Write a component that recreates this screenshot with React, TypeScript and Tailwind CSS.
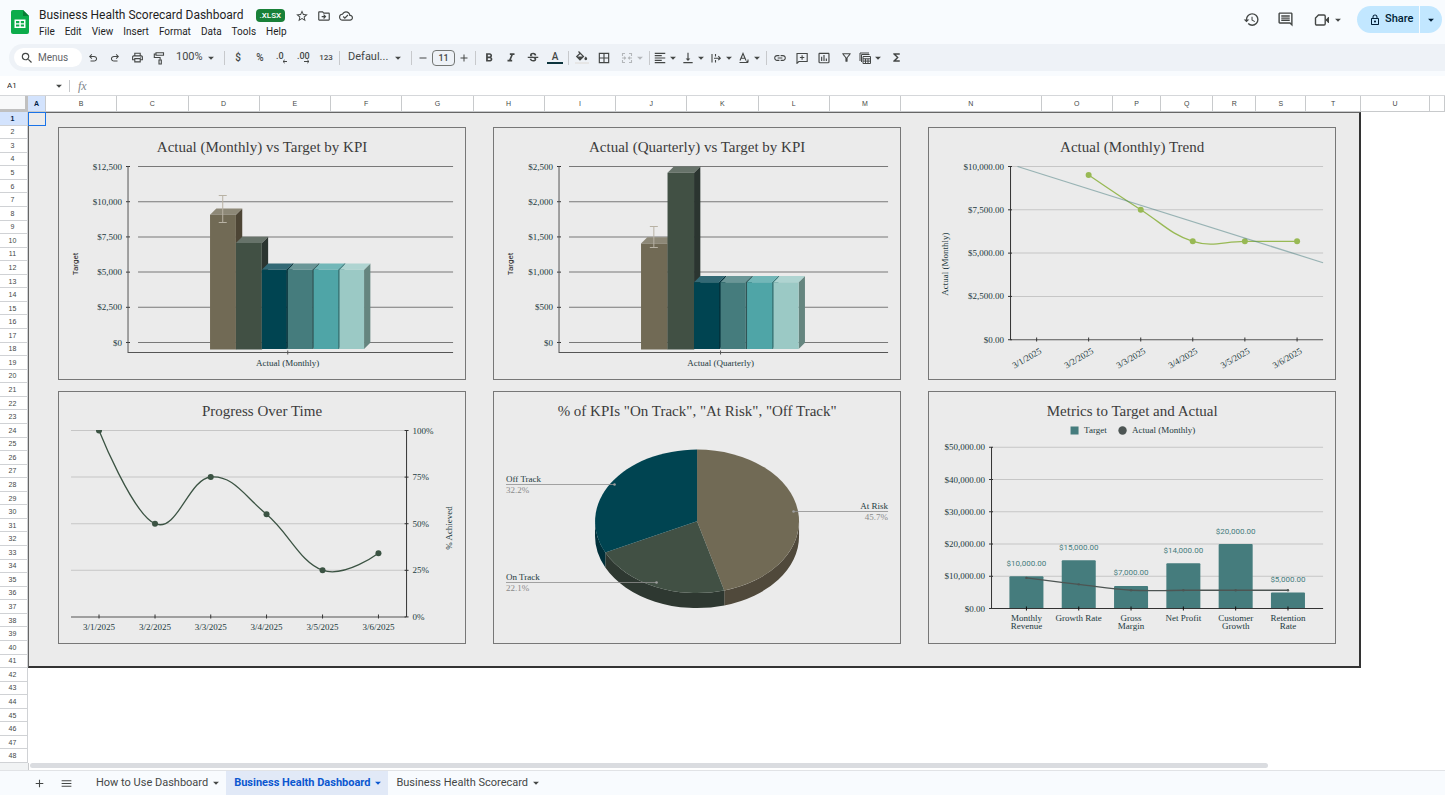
import React from 'react';
import {
  MdAdd,
  MdArrowDropDown,
  MdBorderAll,
  MdFormatAlignLeft,
  MdFormatBold,
  MdFormatItalic,
  MdFunctions,
  MdHistory,
  MdInsertChartOutlined,
  MdLink,
  MdMenu,
  MdOutlineCloudDone,
  MdOutlineComment,
  MdOutlineDriveFileMove,
  MdOutlineFilterAlt,
  MdOutlineLock,
  MdOutlinePrint,
  MdRemove,
  MdSearch,
  MdStarOutline,
  MdStrikethroughS,
  MdVerticalAlignBottom,
} from 'react-icons/md';

type Point = [number, number];

const GRID = '#c6c6c6';
const AXIS = '#333333';
const LABEL = '#1c3a40';

const menus = ['File', 'Edit', 'View', 'Insert', 'Format', 'Data', 'Tools', 'Help'];

const columns = [...'ABCDEFGHIJKLMNOPQRSTU'.split(''), ''];

const rows = Array.from({ length: 48 }, (_, i) => i + 1);

const dates = ['3/1/2025', '3/2/2025', '3/3/2025', '3/4/2025', '3/5/2025', '3/6/2025'];

const barColors = [
  { front: '#716a55', top: '#8d8877', side: '#4d4535' },
  { front: '#415044', top: '#67736a', side: '#2b3530' },
  { front: '#004451', top: '#336975', side: '#002e38' },
  { front: '#457c7d', top: '#6a9697', side: '#2f5556' },
  { front: '#4fa5a7', top: '#72b7b8', side: '#367374' },
  { front: '#9bc9c5', top: '#afd4d1', side: '#65857f' },
];

// Smooth curve through all points
const curve = (points: Point[], tension = 0.2) => {
  const tangent = (i: number): Point => {
    if (i === 0 || i === points.length - 1) return [0, 0];
    return [
      (points[i + 1][0] - points[i - 1][0]) * tension,
      (points[i + 1][1] - points[i - 1][1]) * tension,
    ];
  };
  return points.reduce((d, [x, y], i) => {
    if (i === 0) return `M${x} ${y}`;
    const [px, py] = points[i - 1];
    const [ax, ay] = tangent(i - 1);
    const [bx, by] = tangent(i);
    return `${d} C${px + ax} ${py + ay} ${x - bx} ${y - by} ${x} ${y}`;
  }, '');
};

/* ---------- Icons ---------- */

const SheetsLogo = () => (
  <svg viewBox="0 0 18 24" className="h-6 w-[18px]" aria-hidden="true">
    <path d="M2 0h10l6 6v16a2 2 0 0 1-2 2H2a2 2 0 0 1-2-2V2a2 2 0 0 1 2-2z" fill="#0cac4b" />
    <path d="M12 0l6 6h-6z" fill="#0a7d35" />
    <path d="M3.500 9.500h11v8.500h-11z" fill="#fff" />
    <path d="M5 11h3.300v2.200H5zM9.800 11H13v2.200H9.800zM5 14.500h3.300v2H5zM9.800 14.500H13v2H9.800z" fill="#0cac4b" />
  </svg>
);

const UndoIcon = () => (
  <svg viewBox="0 -960 960 960" className="size-3" fill="currentColor">
    <path d="M280-200v-80h284q63 0 109.500-40T720-420q0-60-46.500-100T564-560H312l104 104-56 56-200-200 200-200 56 56-104 104h252q97 0 169.500 63T806-420q0 94-72.500 157T564-200H280Z" />
  </svg>
);

const RedoIcon = () => (
  <svg viewBox="0 -960 960 960" className="size-3" fill="currentColor">
    <path d="M396-200q-97 0-169.500-63T154-420q0-94 72.500-157T396-640h252L544-744l56-56 200 200-200 200-56-56 104-104H396q-63 0-109.500 40T240-420q0 60 46.500 100T396-280h284v80H396Z" />
  </svg>
);

const PaintIcon = () => (
  <svg viewBox="0 0 12 14" className="h-3.5 w-3" fill="none" stroke="currentColor" strokeWidth="1.1">
    <path d="M3 1.700h7.500v2.600H3zM3 3H1.300v3.500h5.800v2.300" />
    <path d="M6 9h2.300v4H6z" />
  </svg>
);

const FillIcon = () => (
  <svg viewBox="0 0 16 16" className="size-4">
    <path d="M4.500 1.500l5 5-3.500 3.300L2.700 6.500l3.500-3.300" fill="none" stroke="#444746" strokeWidth="1.200" />
    <path d="M3 6.500h6.300L6 9.800zM11.800 6.500c.9 1.100 1.400 1.700 1.400 2.300a1.400 1.400 0 0 1-2.800 0c0-.6.5-1.200 1.400-2.300z" fill="#444746" />
    <path d="M1 12h14v2H1z" fill="#e6e6e6" />
  </svg>
);

const FewerDecimalsIcon = () => (
  <svg viewBox="0 0 14 14" className="size-3.5" fill="currentColor">
    <text x="1" y="8" fontSize="9" fontWeight="500">.0</text>
    <path d="M8 10.500h4M9.700 8.900L8 10.500l1.700 1.600" fill="none" stroke="currentColor" />
  </svg>
);

const MoreDecimalsIcon = () => (
  <svg viewBox="0 0 14 14" className="size-3.5" fill="currentColor">
    <text x="0" y="8" fontSize="9" fontWeight="500">.00</text>
    <path d="M7 10.500h5M10.300 8.900l1.700 1.600-1.700 1.600" fill="none" stroke="currentColor" />
  </svg>
);

const MergeIcon = () => (
  <svg viewBox="0 0 12 12" className="size-3" fill="none" stroke="currentColor" strokeWidth="1.1">
    <path d="M4 1.500H1.500V4M8 1.500h2.500V4M4 10.500H1.500V8M8 10.500h2.500V8M1 6h3.500M3.200 4.700L4.500 6 3.200 7.300M11 6H7.500M8.800 4.700L7.500 6l1.300 1.300" />
  </svg>
);

const WrapIcon = () => (
  <svg viewBox="0 0 12 12" className="size-3" fill="none" stroke="currentColor" strokeWidth="1.1">
    <path d="M2 2v8.500M5.500 2v2.500M5.500 8v2.500M4 6.200h6.200M8.300 4.200l2 2-2 2" />
  </svg>
);

const RotateIcon = () => (
  <svg viewBox="0 0 12 12" className="size-3" fill="none" stroke="currentColor" strokeWidth="1.1">
    <path d="M2 8.500L5 1.500l3 7M3 6.300h4M1.500 10.500h8.500M10 7.500v3M8.500 9l1.500 1.500" />
  </svg>
);

const AddCommentIcon = () => (
  <svg viewBox="0 0 12 12" className="size-3" fill="none" stroke="currentColor" strokeWidth="1.1">
    <path d="M1 11.300V1.500h10.200v8H2.800zM6.100 3.300v4.400M3.900 5.500h4.400" />
  </svg>
);

const TableViewIcon = () => (
  <svg viewBox="0 0 12 12" className="size-3" fill="none" stroke="currentColor">
    <path d="M1 9V1h9M2.500 10V2.500h8" />
    <path d="M4 4.500h7.500v7H4zM4 6.800h7.500M4 9.100h7.500M6.500 6.800v4.700M9 6.800v4.700" />
  </svg>
);

const MeetIcon = () => (
  <svg viewBox="0 0 16 14" className="h-3.5 w-4" fill="none" stroke="currentColor" strokeWidth="1.400">
    <path d="M4.500 2H10a1.200 1.200 0 0 1 1.200 1.200v7.600A1.200 1.200 0 0 1 10 12H2.700a1.200 1.200 0 0 1-1.200-1.200V5z" />
    <path d="M12 7l2.500-2.800v5.600z" fill="currentColor" strokeWidth="1" />
  </svg>
);

/* ---------- Toolbar ---------- */

type ButtonProps = { label: string; children: React.ReactNode };

const ToolButton: React.FC<ButtonProps> = ({ label, children }) => (
  <button type="button" aria-label={label} className="flex h-5 w-[22px] items-center justify-center">
    {children}
  </button>
);

const ToolDropdown: React.FC<ButtonProps> = ({ label, children }) => (
  <button type="button" aria-label={label} className="flex h-5 w-7 items-center justify-end">
    <span className="flex w-3 shrink-0 justify-center">{children}</span>
    <MdArrowDropDown size={14} className="shrink-0" />
  </button>
);

const Divider = () => <span className="mx-0.5 h-3.5 w-px bg-[#c7c9cc]" />;

const ToolSelect: React.FC<{ label: string; value: string; width: string }> = ({ label, value, width }) => (
  <div className={`relative flex items-center ${width}`}>
    <select aria-label={label} className="h-5 w-full appearance-none bg-transparent px-1.5 text-[11px] outline-none">
      <option>{value}</option>
    </select>
    <MdArrowDropDown size={14} className="pointer-events-none absolute right-1" />
  </div>
);

const Toolbar = () => (
  <div className="ml-[9px] flex h-[27px] shrink-0 items-center rounded-l-full bg-[#eef2f7] pl-[5px] text-[#444746]">
    <label className="flex h-[19px] w-[68px] items-center gap-1 rounded-full bg-white pl-1.5">
      <MdSearch size={14} className="shrink-0" />
      <input
        type="text"
        placeholder="Menus"
        aria-label="Menus"
        className="w-full min-w-0 bg-transparent text-[10px] outline-none placeholder:text-[#5f6368]"
      />
    </label>
    <ToolButton label="Undo"><UndoIcon /></ToolButton>
    <ToolButton label="Redo"><RedoIcon /></ToolButton>
    <ToolButton label="Print"><MdOutlinePrint size={13} /></ToolButton>
    <ToolButton label="Paint format"><PaintIcon /></ToolButton>
    <ToolSelect label="Zoom" value="100%" width="w-[52px]" />
    <Divider />
    <ToolButton label="Currency"><span className="text-[10px] font-medium">$</span></ToolButton>
    <ToolButton label="Percent"><span className="text-[10px] font-medium">%</span></ToolButton>
    <ToolButton label="Decrease decimal places"><FewerDecimalsIcon /></ToolButton>
    <ToolButton label="Increase decimal places"><MoreDecimalsIcon /></ToolButton>
    <ToolButton label="More formats"><span className="text-[8px] font-medium">123</span></ToolButton>
    <Divider />
    <ToolSelect label="Font" value="Defaul..." width="w-[67px]" />
    <Divider />
    <button type="button" aria-label="Decrease font size" className="flex h-5 w-[18px] items-center justify-center">
      <MdRemove size={12} />
    </button>
    <input
      aria-label="Font size"
      defaultValue="11"
      className="h-4 w-[23px] rounded-sm border border-[#747775] bg-transparent text-center text-[9px] font-medium outline-none"
    />
    <button type="button" aria-label="Increase font size" className="flex h-5 w-[18px] items-center justify-center">
      <MdAdd size={12} />
    </button>
    <Divider />
    <ToolButton label="Bold"><MdFormatBold size={14} /></ToolButton>
    <ToolButton label="Italic"><MdFormatItalic size={14} /></ToolButton>
    <ToolButton label="Strikethrough"><MdStrikethroughS size={14} /></ToolButton>
    <ToolButton label="Text color">
      <span className="w-4 border-b-2 border-[#0c343d] text-[10px] leading-[11px] font-medium">A</span>
    </ToolButton>
    <Divider />
    <ToolButton label="Fill color"><FillIcon /></ToolButton>
    <ToolButton label="Borders"><MdBorderAll size={14} /></ToolButton>
    <div className="ml-1 text-[#b4b7ba]">
      <ToolDropdown label="Merge cells"><MergeIcon /></ToolDropdown>
    </div>
    <Divider />
    <ToolDropdown label="Horizontal align"><MdFormatAlignLeft size={14} className="shrink-0" /></ToolDropdown>
    <ToolDropdown label="Vertical align"><MdVerticalAlignBottom size={14} className="shrink-0" /></ToolDropdown>
    <ToolDropdown label="Text wrapping"><WrapIcon /></ToolDropdown>
    <ToolDropdown label="Text rotation"><RotateIcon /></ToolDropdown>
    <Divider />
    <ToolButton label="Insert link"><MdLink size={14} /></ToolButton>
    <ToolButton label="Insert comment"><AddCommentIcon /></ToolButton>
    <ToolButton label="Insert chart"><MdInsertChartOutlined size={14} /></ToolButton>
    <ToolButton label="Create a filter"><MdOutlineFilterAlt size={13} /></ToolButton>
    <ToolDropdown label="Table views"><TableViewIcon /></ToolDropdown>
    <ToolButton label="Functions"><MdFunctions size={13} /></ToolButton>
  </div>
);

const Header = () => (
  <header className="flex h-11 shrink-0 items-start justify-between pr-[3px] pl-[11px] text-[#1f1f1f]">
    <div className="flex">
      <div className="pt-2.5"><SheetsLogo /></div>
      <div className="pt-[7px] pl-2.5">
        <div className="flex h-[17px] items-center">
          <h1 className="text-[12px] leading-[17px]">Business Health Scorecard Dashboard</h1>
          <span className="ml-3 rounded-sm bg-[#188038] px-1 text-[8px] leading-[13px] font-medium text-white">.XLSX</span>
          <div className="ml-2.5 flex gap-2 text-[#444746]">
            <button type="button" aria-label="Star"><MdStarOutline size={14} /></button>
            <button type="button" aria-label="Move"><MdOutlineDriveFileMove size={14} /></button>
            <button type="button" aria-label="Saved to Drive"><MdOutlineCloudDone size={14} /></button>
          </div>
        </div>
        <nav className="flex h-3.5 items-center gap-2.5 text-[10px]">
          {menus.map((menu) => (
            <button type="button" key={menu}>{menu}</button>
          ))}
        </nav>
      </div>
    </div>

    <div className="flex items-center pt-1.5 text-[#444746]">
      <button type="button" aria-label="Version history"><MdHistory size={17} /></button>
      <button type="button" aria-label="Comments" className="ml-[17px]"><MdOutlineComment size={17} /></button>
      <button type="button" aria-label="Join a call" className="ml-5 flex items-center gap-px">
        <MeetIcon />
        <MdArrowDropDown size={14} />
      </button>
      <div className="ml-3 flex h-[27px] gap-px text-[#001d35]">
        <button type="button" className="flex w-[62px] items-center gap-1 rounded-l-full bg-[#c2e7ff] pl-3 text-[11px] font-medium">
          <MdOutlineLock size={12} />
          Share
        </button>
        <button type="button" aria-label="Share options" className="flex w-[22px] items-center justify-center rounded-r-full bg-[#c2e7ff]">
          <MdArrowDropDown size={14} />
        </button>
      </div>
    </div>
  </header>
);

const FormulaBar = () => (
  <div className="mt-[5px] flex h-5 shrink-0 items-center border-b border-[#d5d7da] bg-white text-[#444746]">
    <input aria-label="Name box" defaultValue="A1" className="w-[52px] pl-[7px] text-[8px] text-[#1f1f1f] outline-none" />
    <MdArrowDropDown size={14} />
    <span className="ml-[3px] h-3 w-px bg-[#c7c9cc]" />
    <label htmlFor="formula" className="ml-2 font-['Liberation_Serif',serif] text-[12px] text-[#80868b] italic">fx</label>
    <input id="formula" className="ml-2 min-w-0 flex-1 text-[10px] outline-none" />
  </div>
);

/* ---------- Charts ---------- */

const Label: React.FC<React.SVGProps<SVGTextElement>> = (props) => (
  <text fontSize="9" fill={LABEL} dominantBaseline="central" {...props} />
);

const ChartCard: React.FC<{ title: string; children: React.ReactNode }> = ({ title, children }) => (
  <section className="flex min-h-0 min-w-0 flex-col border border-[#777] font-['Georgia','Liberation_Serif',serif]">
    <h2 className="h-[38px] shrink-0 text-center text-[15px] leading-[38px] text-[#3c3c3c]">{title}</h2>
    <svg viewBox="0 0 406 213" className="block min-h-0 w-full flex-1 overflow-visible" role="img" aria-label={title}>
      {children}
    </svg>
  </section>
);

type Bars3DProps = {
  title: string;
  category: string;
  ticks: string[];
  axisX: number;
  firstX: number;
  pitch: number;
  tops: number[];
  error: [number, number, number];
};

const Bars3D: React.FC<Bars3DProps> = ({ title, category, ticks, axisX, firstX, pitch, tops, error }) => {
  const [errX, errTop, errBottom] = error;
  const center = firstX + pitch * 3;
  return (
    <ChartCard title={title}>
      {ticks.map((tick, i) => {
        const y = 0.5 + i * 35.2;
        return (
          <g key={tick}>
            <path d={`M${axisX + 10} ${y}H394`} stroke="#787878" />
            <path d={`M${axisX - 2} ${y}h4`} stroke={AXIS} />
            <Label x={axisX - 6} y={y} textAnchor="end">{tick}</Label>
          </g>
        );
      })}
      <path d={`M${axisX} 0V186.500H394`} fill="none" stroke="#555" />
      {tops.map((top, i) => {
        const x = firstX + i * pitch;
        const right = x + (i < 2 ? pitch : pitch - 1.4);
        const bottom = i < 2 ? 183.5 : 183;
        const { front, top: lid, side } = barColors[i];
        return (
          <g key={i}>
            <path d={`M${right} ${top}l6.300-6.200V${bottom - 6.2}L${right} ${bottom}z`} fill={side} />
            {/* Shadow in the gap before the next bar */}
            {i > 1 && i < 5 && (
              <path d={`M${right} ${top}l6.300-6.200h1.400l-6.300 6.200V${bottom}h-1.400z`} fill={side} />
            )}
            <path d={`M${x} ${top}l6.300-6.200H${right + 6.3}L${right} ${top}z`} fill={lid} />
            <path d={`M${x} ${top}H${right}V${bottom}H${x}z`} fill={front} />
          </g>
        );
      })}
      <path
        d={`M${errX - 4} ${errTop}h8M${errX} ${errTop}V${errBottom}M${errX - 4} ${errBottom}h8`}
        stroke="#b8b2a4"
      />
      <path d={`M${center} 184.500v4`} stroke="#555" />
      <Label x={center} y="197" textAnchor="middle">{category}</Label>
      <Label transform="translate(16 98) rotate(-90)" textAnchor="middle" fontFamily="Roboto, sans-serif" fontSize="8" fill="#222">
        Target
      </Label>
    </ChartCard>
  );
};

const TrendChart = () => {
  const xs = [107.6, 159.6, 211.7, 263.7, 315.8, 368];
  const points: Point[] = [[159.6, 9], [211.7, 43.7], [263.7, 75.3], [315.8, 75.3], [368, 75.3]];
  return (
    <ChartCard title="Actual (Monthly) Trend">
      {['$10,000.00', '$7,500.00', '$5,000.00', '$2,500.00', '$0.00'].map((tick, i) => {
        const y = 0.5 + i * 43.3;
        return (
          <g key={tick}>
            <path d={`M81 ${y}H394`} stroke={i === 4 ? '#555' : GRID} />
            <path d={`M79 ${y}h4`} stroke={AXIS} />
            <Label x="75" y={y} textAnchor="end">{tick}</Label>
          </g>
        );
      })}
      <path d="M81.500 0V174" stroke={AXIS} />
      {xs.map((x, i) => (
        <g key={x}>
          <path d={`M${x} 171.500v4`} stroke={AXIS} />
          <Label transform={`translate(${x + 4} 184) rotate(-30)`} textAnchor="end">{dates[i]}</Label>
        </g>
      ))}
      <path d={curve(points)} fill="none" stroke="#98b954" strokeWidth="1.300" />
      {points.map(([x, y]) => (
        <circle key={x} cx={x} cy={y} r="3" fill="#98b954" />
      ))}
      <path d="M88.500 .5L394 96.700" stroke="#457c7d" strokeOpacity=".5" strokeWidth="1.200" />
      <Label transform="translate(16 98) rotate(-90)" textAnchor="middle">Actual (Monthly)</Label>
    </ChartCard>
  );
};

const ProgressChart = () => {
  const points: Point[] = [[40, 0.5], [96, 93.7], [151.7, 47], [207.5, 84.3], [263.5, 140.2], [319.4, 123.3]];
  return (
    <ChartCard title="Progress Over Time">
      <clipPath id="progress-plot">
        <path d="M12 0H394V188H12z" />
      </clipPath>
      {['100%', '75%', '50%', '25%', '0%'].map((tick, i) => {
        const y = 0.5 + i * 46.6;
        return (
          <g key={tick}>
            <path d={`M12 ${y}H347`} stroke={i === 4 ? '#555' : GRID} />
            <path d={`M345.500 ${y}h4`} stroke={AXIS} />
            <Label x="353.500" y={y}>{tick}</Label>
          </g>
        );
      })}
      <path d="M347.500 0V187" stroke={AXIS} />
      <g clipPath="url(#progress-plot)">
        <path d={curve(points)} fill="none" stroke="#3b5343" strokeWidth="1.300" />
        {points.map(([x, y]) => (
          <circle key={x} cx={x} cy={y} r="3" fill="#3b5343" />
        ))}
      </g>
      {points.map(([x], i) => (
        <g key={x}>
          <path d={`M${x} 184.500v4`} stroke={AXIS} />
          <Label x={x} y="197" textAnchor="middle">{dates[i]}</Label>
        </g>
      ))}
      <Label transform="translate(390 98) rotate(-90)" textAnchor="middle">% Achieved</Label>
    </ChartCard>
  );
};

const StatusPie = () => (
  <ChartCard title={'% of KPIs "On Track", "At Risk", "Off Track"'}>
    {/* Rim */}
    <path d="M305 91.300v15A102 71.700 0 0 1 230.200 175.400v-15A102 71.700 0 0 0 305 91.300z" fill="#50493b" />
    <path d="M230.200 160.400v15A102 71.700 0 0 1 111.300 137.600v-15A102 71.700 0 0 0 230.200 160.400z" fill="#2e3831" />
    <path d="M111.300 122.600v15A102 71.700 0 0 1 101 106.300v-15A102 71.700 0 0 0 111.300 122.600z" fill="#00303a" />
    {/* Slices */}
    <path d="M203 91.300V19.600A102 71.700 0 0 1 230.200 160.400z" fill="#716a55" />
    <path d="M203 91.300L230.200 160.400A102 71.700 0 0 1 111.300 122.600z" fill="#415044" />
    <path d="M203 91.300L111.300 122.600A102 71.700 0 0 1 203 19.600z" fill="#004451" />
    {/* Callouts */}
    <g stroke="#8f8f8f" strokeOpacity=".8">
      <path d="M12 54.500H120M299 81.500H394M12 152.500H162" />
    </g>
    <g fill="#9e9e9e">
      <circle cx="120.500" cy="54.500" r="1.300" />
      <circle cx="299.500" cy="81.500" r="1.300" />
      <circle cx="162.500" cy="152.500" r="1.300" />
    </g>
    <Label x="12" y="49">Off Track</Label>
    <Label x="12" y="60" fill="#8a8a8a">32.2%</Label>
    <Label x="394" y="76" textAnchor="end">At Risk</Label>
    <Label x="394" y="87" textAnchor="end" fill="#8a8a8a">45.7%</Label>
    <Label x="12" y="147">On Track</Label>
    <Label x="12" y="158" fill="#8a8a8a">22.1%</Label>
  </ChartCard>
);

const metrics = [
  { name: ['Monthly', 'Revenue'], target: 10000, actual: 9500 },
  { name: ['Growth Rate'], target: 15000, actual: 7500 },
  { name: ['Gross', 'Margin'], target: 7000, actual: 5667 },
  { name: ['Net Profit'], target: 14000, actual: 5667 },
  { name: ['Customer', 'Growth'], target: 20000, actual: 5667 },
  { name: ['Retention', 'Rate'], target: 5000, actual: 5667 },
];

const MetricsChart = () => {
  const base = 178.5;
  const scale = 32.25 / 10000;
  const centerOf = (i: number) => 97.4 + i * 52.3;
  const line: Point[] = metrics.map((m, i) => [centerOf(i), base - m.actual * scale]);
  return (
    <ChartCard title="Metrics to Target and Actual">
      <rect x="141.500" y="-3.500" width="8" height="8" fill="#457c7d" />
      <Label x="155" y="0">Target</Label>
      <circle cx="193.500" cy="0.500" r="4.200" fill="#4d5553" />
      <Label x="203" y="0">Actual (Monthly)</Label>
      {[0, 10000, 20000, 30000, 40000, 50000].map((value) => {
        const y = base - value * scale;
        return (
          <g key={value}>
            <path d={`M62 ${y}H394`} stroke={GRID} />
            <path d={`M60 ${y}h4`} stroke={AXIS} />
            <Label x="56" y={y} textAnchor="end">{`$${value.toLocaleString('en-US')}.00`}</Label>
          </g>
        );
      })}
      {metrics.map((m, i) => {
        const x = centerOf(i);
        const top = base - m.target * scale;
        return (
          <g key={m.name[0]}>
            <path d={`M${x - 17} ${base}V${top + 1}q0-1 1-1h32q1 0 1 1V${base}z`} fill="#457c7d" />
            <Label x={x} y={top - 13} textAnchor="middle" fontFamily="Roboto, sans-serif" fontSize="8" fill="#457c7d">
              {`$${m.target.toLocaleString('en-US')}.00`}
            </Label>
            {m.name.map((part, row) => (
              <Label key={part} x={x} y={188 + row * 8} textAnchor="middle">{part}</Label>
            ))}
          </g>
        );
      })}
      <path d="M62.500 17V178.500H394" fill="none" stroke={AXIS} />
      {line.map(([x]) => (
        <path key={x} d={`M${x} 176.500v4`} stroke="#111" />
      ))}
      <path d={curve(line)} fill="none" stroke="#4d5553" strokeWidth="1.300" />
      {line.map(([x, y]) => (
        <circle key={x} cx={x} cy={y} r="1.200" fill="#4d5553" />
      ))}
    </ChartCard>
  );
};

/* ---------- Sheet ---------- */

const ColumnHeaders = () => (
  <div className="flex h-4 shrink-0 bg-white text-[7px] text-[#444746]">
    <div className="w-7 shrink-0 border-r-[3px] border-b-[3px] border-[#c0c0c0] bg-[#f8f9fa]" />
    <div className="grid min-w-0 flex-1 grid-cols-[72fr_repeat(12,285fr)_562fr_285fr_194fr_208fr_172fr_200fr_220fr_274fr_61fr]">
      {columns.map((name) => (
        <div
          key={name}
          className={`flex items-center justify-center border-r border-b border-[#c8cacc] pt-0.5 ${
            name === 'A' ? 'bg-[#d3e3fd] font-bold text-[#041e49]' : ''
          }`}
        >
          {name}
        </div>
      ))}
    </div>
  </div>
);

const RowHeaders = () => (
  <div className="flex w-7 shrink-0 flex-col bg-white text-[7px] leading-none text-[#444746]">
    {rows.map((row) => (
      <div
        key={row}
        className={`flex min-h-0 flex-1 items-center justify-center border-r border-b border-[#d0d2d5] pr-0.5 ${
          row === 1 ? 'bg-[#d3e3fd] font-bold text-[#041e49]' : ''
        }`}
      >
        {row}
      </div>
    ))}
  </div>
);

const Dashboard = () => (
  <div className="relative grid min-h-0 flex-[41] grid-cols-[5333fr_335fr] grid-rows-1">
    <div className="grid min-h-0 grid-cols-3 grid-rows-2 gap-x-[27px] gap-y-[11px] border-t border-r-2 border-b-2 border-l border-t-[#666] border-r-[#333] border-b-[#333] border-l-[#666] bg-[#ebebeb] pt-3.5 pr-[23px] pb-[22px] pl-[29px]">
      <Bars3D
        title="Actual (Monthly) vs Target by KPI"
        category="Actual (Monthly)"
        ticks={['$12,500', '$10,000', '$7,500', '$5,000', '$2,500', '$0']}
        axisX={69}
        firstX={151}
        pitch={25.9}
        tops={[48.7, 77, 103.7, 103.7, 103.7, 103.7]}
        error={[163.7, 29.5, 56.5]}
      />
      <Bars3D
        title="Actual (Quarterly) vs Target by KPI"
        category="Actual (Quarterly)"
        ticks={['$2,500', '$2,000', '$1,500', '$1,000', '$500', '$0']}
        axisX={65}
        firstX={147}
        pitch={26.5}
        tops={[77.5, 6.7, 116.3, 116.3, 116.3, 116.3]}
        error={[159.8, 60.5, 81.5]}
      />
      <TrendChart />
      <ProgressChart />
      <StatusPie />
      <MetricsChart />
    </div>
    {/* Selected cell */}
    <div className="absolute top-0 left-0 h-3.5 w-[18px] border border-[#1a73e8]" />
  </div>
);

const tabs = [
  { name: 'How to Use Dashboard', active: false },
  { name: 'Business Health Dashboard', active: true },
  { name: 'Business Health Scorecard', active: false },
];

const SheetTabs = () => (
  <footer className="flex h-[25px] shrink-0 items-stretch border-t border-[#e1e3e6] pl-7 text-[11px] text-[#444746]">
    <button type="button" aria-label="Add sheet" className="flex w-[22px] items-center justify-center"><MdAdd size={13} /></button>
    <button type="button" aria-label="All sheets" className="mr-[11px] ml-[5px] flex w-[22px] items-center justify-center"><MdMenu size={13} /></button>
    {tabs.map(({ name, active }) => (
      <button
        type="button"
        key={name}
        className={`flex items-center gap-px pr-[3px] pl-2 ${active ? 'bg-[#e1e9f7] font-bold text-[#0b57d0]' : ''}`}
      >
        {name}
        <MdArrowDropDown size={14} />
      </button>
    ))}
  </footer>
);

const App: React.FC = () => (
  <div className="flex h-screen flex-col overflow-hidden bg-[#f8fbfe] font-['Google_Sans','Roboto',sans-serif]">
    <Header />
    <Toolbar />
    <FormulaBar />
    <main className="flex min-h-0 flex-1 flex-col font-['Liberation_Sans',Arial,sans-serif]">
      <ColumnHeaders />
      <div className="flex min-h-0 flex-1 bg-white">
        <RowHeaders />
        <div className="flex min-w-0 flex-1 flex-col">
          <Dashboard />
          <div className="flex-[7]" />
        </div>
      </div>
      <div className="flex h-[7px] shrink-0 bg-[#f1f3f4] pl-7">
        <div className="flex flex-1 border-l border-[#c8cacc] bg-white pl-px">
          <div className="h-[5px] w-7/8 rounded-full bg-[#dadce0]" />
        </div>
      </div>
    </main>
    <SheetTabs />
  </div>
);

export default App;
